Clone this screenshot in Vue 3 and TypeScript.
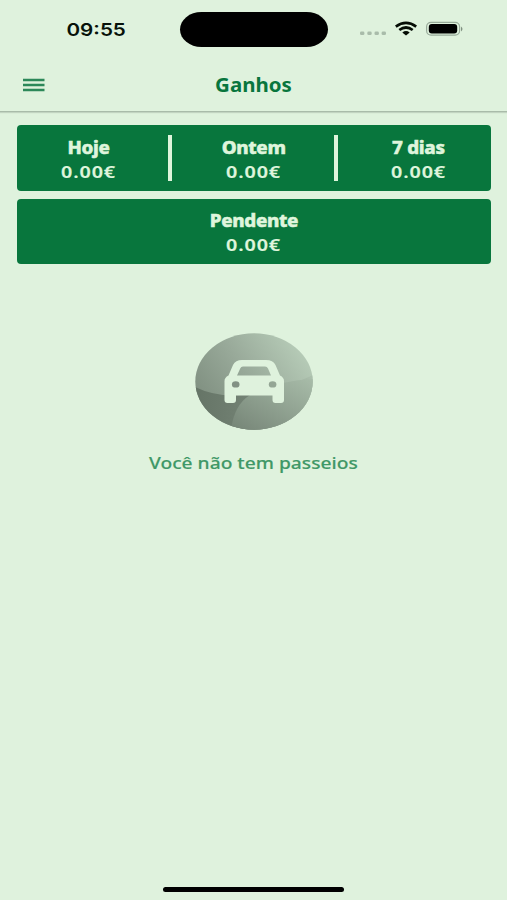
<script setup lang="ts">
interface Earning {
  label: string
  value: string
}

const periods: Earning[] = [
  { label: 'Hoje', value: '0.00€' },
  { label: 'Ontem', value: '0.00€' },
  { label: '7 dias', value: '0.00€' },
]
const pending: Earning = { label: 'Pendente', value: '0.00€' }
</script>

<template>
  <div class="screen">
    <div class="status">
      <div class="clock"><span class="time">09:55</span></div>
      <div class="island"></div>
      <svg class="indicators" width="108" height="20" viewBox="0 0 108 20">
        <g fill="#a9bcaa">
          <rect x="2" y="11.5" width="4.4" height="3.6" rx="1.4" />
          <rect x="9.3" y="11.5" width="4.4" height="3.6" rx="1.4" />
          <rect x="16.5" y="11.5" width="4.4" height="3.6" rx="1.4" />
          <rect x="23.6" y="11.5" width="4.4" height="3.6" rx="1.4" />
        </g>
        <g fill="none" stroke="#050d05" stroke-width="2.7">
          <path d="M37.8 6.6Q48 -0.8 58.2 6.6" />
          <path d="M41.3 10Q48 5 54.7 10" />
        </g>
        <path d="M44.3 12.4Q48 9.6 51.7 12.4L48 15.6Z" fill="#050d05" />
        <rect x="68.6" y="2.4" width="33" height="12.8" rx="4.4" fill="none" stroke="#98aa99" stroke-width="1.2" />
        <rect x="70.8" y="4.1" width="28.4" height="9.4" rx="3" fill="#000" />
        <path d="M103 6.4Q106 8.9 103 11.4Z" fill="#7f9080" />
      </svg>
    </div>

    <header class="bar">
      <svg class="menu" width="22" height="14" viewBox="0 0 22 14">
        <path d="M0 2H21.5M0 7H21.5M0 12H21.5" stroke="#2c8859" stroke-width="2.4" />
      </svg>
      <h1 class="title">Ganhos</h1>
    </header>

    <main class="content">
      <section class="card periods">
        <template v-for="(p, i) in periods" :key="p.label">
          <div v-if="i > 0" class="divider"></div>
          <div class="cell">
            <span class="label">{{ p.label }}</span>
            <span class="value">{{ p.value }}</span>
          </div>
        </template>
      </section>
      <section class="card">
        <div class="cell">
          <span class="label">{{ pending.label }}</span>
          <span class="value">{{ pending.value }}</span>
        </div>
      </section>

      <section class="empty">
        <svg width="118" height="97" viewBox="0 0 118 97">
          <defs>
            <linearGradient id="disc" x1="0.05" y1="0.7" x2="0.9" y2="0.2">
              <stop offset="0" stop-color="#7f8f80" />
              <stop offset="0.5" stop-color="#99aa9a" />
              <stop offset="1" stop-color="#b5cab6" />
            </linearGradient>
            <linearGradient id="hill" x1="0" y1="0" x2="1" y2="0">
              <stop offset="0" stop-color="#657466" />
              <stop offset="0.45" stop-color="#738274" />
              <stop offset="1" stop-color="#adc1ae" />
            </linearGradient>
            <linearGradient id="front" x1="0" y1="1" x2="1" y2="0">
              <stop offset="0" stop-color="#758476" />
              <stop offset="1" stop-color="#a8bca9" />
            </linearGradient>
            <clipPath id="round"><ellipse cx="59" cy="48.5" rx="58.7" ry="48.2" /></clipPath>
          </defs>
          <g clip-path="url(#round)">
            <rect width="118" height="97" fill="url(#disc)" />
            <path d="M0 54Q25 66 55 61Q88 57 118 42V97H0Z" fill="url(#hill)" />
            <path d="M36 97Q39 72 55 62Q85 47 118 46V97Z" fill="url(#front)" />
          </g>
          <path
            fill="#dff2dd"
            fill-rule="evenodd"
            d="M47 27H71Q78 27 80.5 32L85 42.5Q89 44.5 89 48V67Q89 70 86 70H80.5Q77.5 70 77.5 67V62.5H41V67Q41 70 38 70H32.5Q29.5 70 29.5 67V48Q29.5 44.5 33.5 42.5L38 32Q40.5 27 47 27ZM48 33.5Q46 33.5 45.2 35.5L42 42.5H76L73 35.5Q72.2 33.5 70 33.5Z"
          />
          <ellipse cx="40.7" cy="51.4" rx="3.8" ry="3.2" fill="#829184" />
          <ellipse cx="77.6" cy="51.4" rx="3.8" ry="3.2" fill="#94a695" />
        </svg>
        <p class="message">Você não tem passeios</p>
      </section>
    </main>

    <div class="home"></div>
  </div>
</template>

<style>
body {
  margin: 0;
  background: #dff2dd;
}
</style>

<style scoped>
.screen {
  box-sizing: border-box;
  width: 507px;
  height: 900px;
  display: flex;
  flex-direction: column;
  background: #dff2dd;
  color: #08763d;
  font-family: 'Noto Sans', sans-serif;
  overflow: hidden;
}
.status {
  display: grid;
  grid-template-columns: 180px 148px 1fr;
  height: 58px;
  padding-top: 12px;
  box-sizing: border-box;
}
.clock {
  display: flex;
  justify-content: center;
  padding-left: 12px;
  line-height: 35px;
}
.time {
  font: 600 17.5px/35px Inter, sans-serif;
  color: #07120a;
  transform: scaleX(1.18);
}
.island {
  height: 35px;
  border-radius: 22px / 18px;
  background: #000;
}
.indicators {
  margin: 8px 0 0 30px;
}
.bar {
  display: grid;
  grid-template-columns: 60px 1fr 60px;
  align-items: center;
  height: 53px;
  border-bottom: 1px solid #a9bba9;
  box-shadow: 0 1px 1px #c2d4c1;
}
.menu {
  margin-left: 23px;
}
.title {
  margin: 1px 0 0;
  text-align: center;
  font-size: 18.8px;
  font-weight: 700;
  line-height: 26px;
  transform: scaleX(1.09);
}
.content {
  display: flex;
  flex-direction: column;
  gap: 8px;
  flex: 1;
  padding: 13.4px 16.5px 0 17px;
}
.card {
  box-sizing: border-box;
  height: 65.4px;
  padding-top: 9.6px;
  border-radius: 4px;
  background: #08763d;
  color: #dff5dc;
}
.periods {
  display: grid;
  grid-template-columns: 142.6px 4px 1fr 4px 143.6px;
  column-gap: 8.8px;
}
.cell {
  display: flex;
  flex-direction: column;
  align-items: center;
}
.label {
  font-size: 17.4px;
  font-weight: 800;
  line-height: 25px;
  letter-spacing: -0.3px;
  -webkit-text-stroke: 0.5px currentColor;
  transform: scaleX(1.08);
}
.value {
  font-size: 15.4px;
  font-weight: 600;
  line-height: 25.4px;
  letter-spacing: 0.7px;
  -webkit-text-stroke: 0.2px currentColor;
  transform: scaleX(1.28);
}
.divider {
  height: 46.5px;
  background: #dff5dc;
}
.empty {
  display: flex;
  flex-direction: column;
  align-items: center;
  padding-top: 61px;
}
.message {
  margin: 20px 0 0;
  font-size: 17px;
  font-weight: 500;
  line-height: 26px;
  color: #3f9867;
  -webkit-text-stroke: 0.15px currentColor;
  transform: scaleX(1.13);
}
.home {
  align-self: center;
  width: 181px;
  height: 5px;
  margin-bottom: 8px;
  border-radius: 3px;
  background: #000;
}
</style>
